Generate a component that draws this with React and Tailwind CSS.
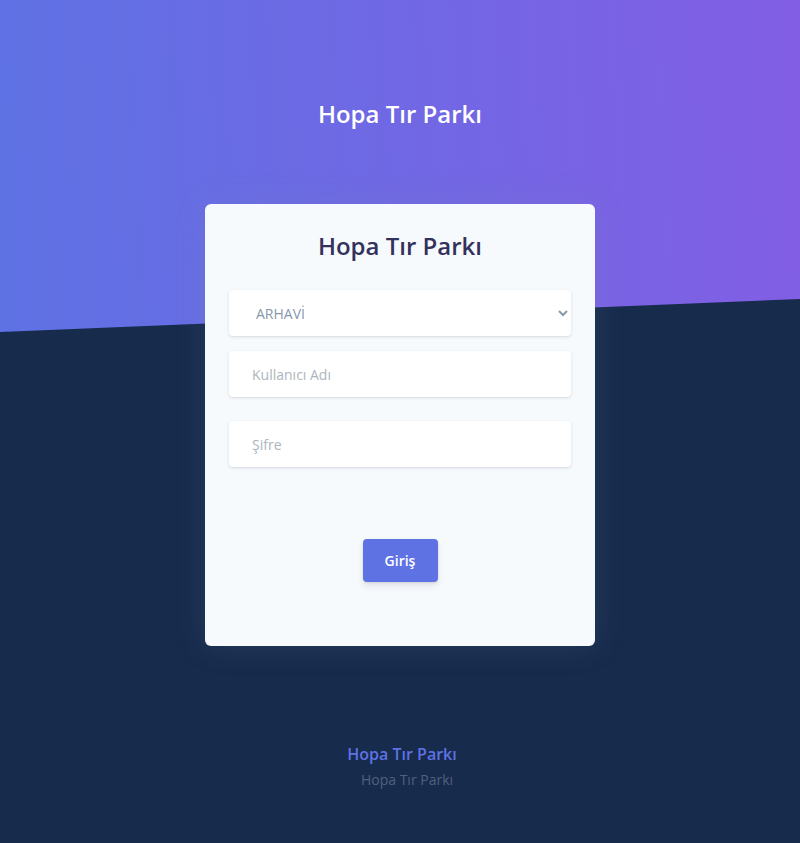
import React, { useState } from 'react';

const App = () => {
    const [form, setForm] = useState({ branch: 'ARHAVI', username: '', password: '' });

    const handleChange = (field, value) => setForm(prev => ({ ...prev, [field]: value }));

    return (
        <div className="min-h-screen bg-[#172b4d] font-['Open_Sans',sans-serif]">
            {/* Header */}
            <div className="relative h-[332px] bg-[linear-gradient(87deg,#5e72e4_0,#825ee4_100%)]">
                <div className="pt-[96px] text-center">
                    <h1 className="text-[24px] leading-[36px] font-semibold text-white">Hopa Tır Parkı</h1>
                </div>
                <svg className="absolute bottom-0 left-0 w-full h-[33px]" viewBox="0 0 800 33" preserveAspectRatio="none">
                    <polygon points="800,0 800,33 0,33" fill="#172b4d" />
                </svg>
            </div>

            {/* Login card */}
            <div className="relative z-10 -mt-[128px] flex justify-center">
                <form
                    onSubmit={(e) => e.preventDefault()}
                    className="w-[390px] h-[442px] rounded-[6px] bg-[#f7fafc] shadow-[0_0_32px_0_rgba(136,152,170,0.15)] px-[24px] pt-[24px]"
                >
                    <h2 className="text-center text-[24px] leading-[36px] font-semibold text-[#32325d]">Hopa Tır Parkı</h2>

                    <div className="mt-[26px]">
                        <select
                            value={form.branch}
                            onChange={(e) => handleChange('branch', e.target.value)}
                            className="w-full h-[46px] rounded-[4px] bg-white pl-[23px] pr-[4px] text-[14px] text-[#8898aa] outline-none shadow-[0_1px_3px_rgba(50,50,93,0.15),0_1px_0_rgba(0,0,0,0.02)]"
                        >
                            <option value="ARHAVI">ARHAVİ</option>
                            <option value="HOPA">HOPA</option>
                        </select>
                    </div>

                    <div className="mt-[15px]">
                        <input
                            type="text"
                            value={form.username}
                            onChange={(e) => handleChange('username', e.target.value)}
                            placeholder="Kullanıcı Adı"
                            className="w-full h-[46px] rounded-[4px] bg-white px-[23px] text-[14px] text-[#8898aa] placeholder-[#adb5bd] outline-none shadow-[0_1px_3px_rgba(50,50,93,0.15),0_1px_0_rgba(0,0,0,0.02)]"
                        />
                    </div>

                    <div className="mt-[24px]">
                        <input
                            type="password"
                            value={form.password}
                            onChange={(e) => handleChange('password', e.target.value)}
                            placeholder="Şifre"
                            className="w-full h-[46px] rounded-[4px] bg-white px-[23px] text-[14px] text-[#8898aa] placeholder-[#adb5bd] outline-none shadow-[0_1px_3px_rgba(50,50,93,0.15),0_1px_0_rgba(0,0,0,0.02)]"
                        />
                    </div>

                    <div className="mt-[72px] flex justify-center">
                        <button
                            type="submit"
                            className="w-[75px] h-[43px] rounded-[4px] bg-[#5e72e4] text-white text-[14px] font-semibold shadow-[0_4px_6px_rgba(50,50,93,0.11),0_1px_3px_rgba(0,0,0,0.08)]"
                        >
                            Giriş
                        </button>
                    </div>
                </form>
            </div>

            {/* Footer */}
            <div className="pt-[96px] pb-[50px] text-center">
                <div className="pl-[4px] text-[16px] leading-[24px] font-semibold text-[#5e72e4]">Hopa Tır Parkı</div>
                <div className="mt-[3px] pl-[14px] text-[14px] leading-[21px] text-[#52607d]">Hopa Tır Parkı</div>
            </div>
        </div>
    );
};

export default App;
